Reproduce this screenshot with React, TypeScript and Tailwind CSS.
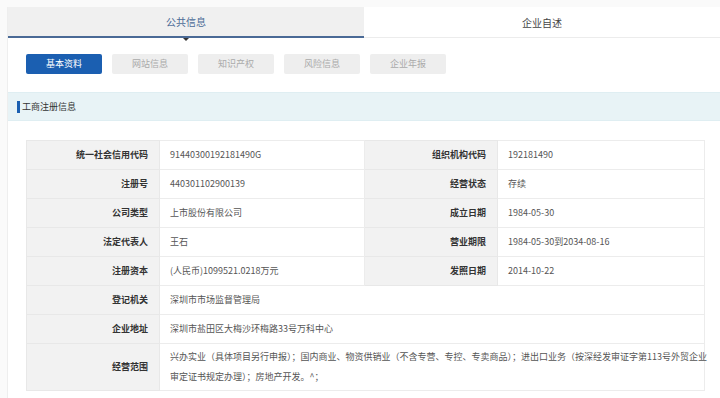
import React from "react";

const font = { fontFamily: '"Noto Sans CJK SC", "Noto Sans", "Liberation Sans", sans-serif' };

type Row = [string, string, string?, string?];

const rows: Row[] = [
  ["统一社会信用代码", "91440300192181490G", "组织机构代码", "192181490"],
  ["注册号", "440301102900139", "经营状态", "存续"],
  ["公司类型", "上市股份有限公司", "成立日期", "1984-05-30"],
  ["法定代表人", "王石", "营业期限", "1984-05-30到2034-08-16"],
  ["注册资本", "(人民币)1099521.0218万元", "发照日期", "2014-10-22"],
  ["登记机关", "深圳市市场监督管理局"],
  ["企业地址", "深圳市盐田区大梅沙环梅路33号万科中心"],
];

export default function App() {
  return (
    <div className="w-[720px] h-[398px] bg-[#fafafa] overflow-hidden pt-[7px] pl-[7px]" style={font}>
      <div className="w-[713px] h-[391px] bg-white border-l border-[#eeeeee]">
        {/* Tabs */}
        <div className="flex h-[31px]">
          <div className="relative w-[356px] bg-[#f0f0f0] border-b-2 border-[#4a6a96] flex items-center justify-center text-[10px] text-[#4a6a96]">
            公共信息
            <div className="absolute left-1/2 -bottom-[5px] -translate-x-1/2 w-0 h-0 border-l-[3px] border-r-[3px] border-t-[3px] border-l-transparent border-r-transparent border-t-[#333]" />
          </div>
          <div className="flex-1 bg-white border-b border-[#ececec] flex items-center justify-center text-[10px] text-[#444]">
            企业自述
          </div>
        </div>

        {/* Sub buttons */}
        <div className="flex gap-[10px] pl-[18px] pt-[16px] h-[54px]">
          <div className="w-[76px] h-[20px] rounded-[2px] bg-[#1b5fb1] text-white text-[9px] flex items-center justify-center">基本资料</div>
          {["网站信息", "知识产权", "风险信息", "企业年报"].map((t) => (
            <div key={t} className="w-[76px] h-[20px] rounded-[2px] bg-[#eeeeee] text-[#aaaaaa] text-[9px] flex items-center justify-center">{t}</div>
          ))}
        </div>

        {/* Section header */}
        <div className="h-[29px] bg-[#e8f3f6] border-y border-[#dfeef2] flex items-center pl-[9px]">
          <div className="w-[3px] h-[12px] bg-[#1b5fb1] mr-[2px]" />
          <span className="text-[9px] text-[#333]">工商注册信息</span>
        </div>

        {/* Table */}
        <div className="pl-[18px] pt-[19px]">
          <table className="table-fixed border-collapse text-[9px]" style={{ width: 678 }}>
            <colgroup>
              <col style={{ width: 133 }} />
              <col style={{ width: 205 }} />
              <col style={{ width: 133 }} />
              <col style={{ width: 207 }} />
            </colgroup>
            <tbody>
              {rows.map((r, i) => (
                <tr key={i} className="h-[29px]">
                  <td className="bg-[#f2f2f2] border border-[#e8e8e8] text-right pr-[11px] text-[#333] font-semibold">{r[0]}</td>
                  {r[2] ? (
                    <>
                      <td className="border border-[#ececec] pl-[10px] text-[#555]">{r[1]}</td>
                      <td className="bg-[#f2f2f2] border border-[#e8e8e8] text-right pr-[11px] text-[#333] font-semibold">{r[2]}</td>
                      <td className="border border-[#ececec] pl-[10px] text-[#555]">{r[3]}</td>
                    </>
                  ) : (
                    <td colSpan={3} className="border border-[#ececec] pl-[10px] text-[#555]">{r[1]}</td>
                  )}
                </tr>
              ))}
              <tr className="h-[47px]">
                <td className="bg-[#f2f2f2] border border-[#e8e8e8] text-right pr-[11px] text-[#333] font-semibold">经营范围</td>
                <td colSpan={3} className="border border-[#ececec] pl-[10px] pr-[8px] text-[#555] leading-[20px] whitespace-nowrap">
                  兴办实业（具体项目另行申报）；国内商业、物资供销业（不含专营、专控、专卖商品）；进出口业务（按深经发审证字第113号外贸企业
                  <br />
                  审定证书规定办理）；房地产开发。^；
                </td>
              </tr>
            </tbody>
          </table>
        </div>
      </div>
    </div>
  );
}
